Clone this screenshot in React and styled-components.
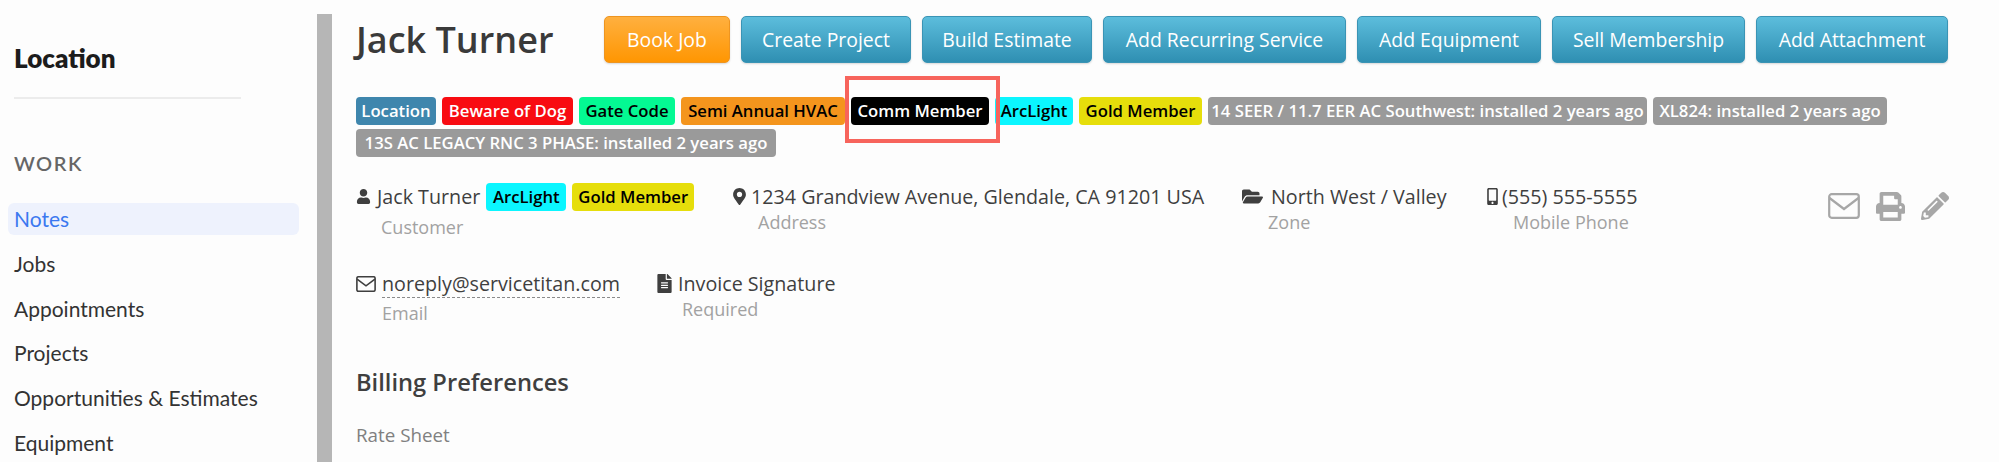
import React from "react";
import styled, { createGlobalStyle } from "styled-components";
import { FaUser, FaMapMarkerAlt, FaFolderOpen, FaMobileAlt, FaFileAlt, FaPrint, FaPencilAlt } from "react-icons/fa";

const GlobalStyle = createGlobalStyle`
	html, body {
		margin: 0;
		height: 100%;
		background: #fdfdfd;
		overflow: hidden;
	}
	body {
		font-family: "Open Sans", "Noto Sans", sans-serif;
		color: #3a3a3a;
	}
`;

const Page = styled.div`
	position: relative;
	display: flex;
	height: 462px;
	overflow: hidden;
`;

const Sidebar = styled.aside`
	width: 317px;
	flex: none;
	padding: 43px 18px 0 8px;
	box-sizing: border-box;
	font-family: "Lato", "Noto Sans", sans-serif;
`;

const SideTitle = styled.h2`
	margin: 0 0 0 6px;
	font-size: 26px;
	line-height: 30px;
	font-weight: 800;
	color: #1c1c1c;
`;

const SideRule = styled.hr`
	width: 227px;
	height: 2px;
	border: 0;
	margin: 24px 0 0 6px;
	background: #ececec;
`;

const SideHeading = styled.div`
	margin: 53px 0 0 6px;
	font-size: 20px;
	line-height: 22px;
	font-weight: 600;
	letter-spacing: 1.5px;
	color: #666;
`;

const NavList = styled.nav`
	display: flex;
	flex-direction: column;
	gap: 12.75px;
	margin-top: 29px;
`;

const NavItem = styled.div`
	height: 32px;
	line-height: 31px;
	padding-left: 6px;
	font-size: 21px;
	border-radius: 6px;
	color: ${({ $active }) => ($active ? "#3b78f0" : "#333")};
	background: ${({ $active }) => ($active ? "#eef2fd" : "transparent")};
`;

const Divider = styled.div`
	width: 15px;
	flex: none;
	margin-top: 14px;
	background: #b6b6b6;
`;

const Main = styled.main`
	flex: 1;
	min-width: 0;
	padding: 16px 0 0 24px;
`;

const Header = styled.div`
	display: flex;
	align-items: center;
	height: 47px;
`;

const Name = styled.h1`
	width: 248px;
	flex: none;
	margin: 0;
	font-size: 36px;
	line-height: 44px;
	font-weight: 600;
	color: #3a3a3a;
`;

const Buttons = styled.div`
	display: flex;
	gap: 11px;
`;

const ActionButton = styled.button`
	width: ${({ $w }) => $w}px;
	height: 47px;
	padding: 0;
	font-family: inherit;
	font-size: 19.4px;
	color: #fff;
	border-radius: 5px;
	border: 1px solid ${({ $orange }) => ($orange ? "#ee9520" : "#3a94b5")};
	background: ${({ $orange }) =>
		$orange ? "linear-gradient(#ffb03f, #ff9602)" : "linear-gradient(#5cbddc, #2f8fb2)"};
	box-shadow: 0 1px 2px rgba(0, 0, 0, 0.15);
`;

const TagRow = styled.div`
	display: flex;
	flex-wrap: wrap;
	gap: 4px 6px;
	width: 1560px;
	margin-top: 34px;
`;

const Tag = styled.span`
	display: inline-block;
	width: ${({ $w }) => $w}px;
	height: 28px;
	line-height: 27px;
	box-sizing: border-box;
	text-align: center;
	font-size: 16.7px;
	font-weight: 600;
	white-space: nowrap;
	border-radius: 4px;
	color: ${({ $fg }) => $fg || "#fff"};
	background: ${({ $bg }) => $bg};
`;

const InfoRow = styled.div`
	display: flex;
	margin-top: ${({ $top }) => $top}px;
`;

const Field = styled.div`
	width: ${({ $w }) => $w}px;
	flex: none;
`;

const FieldLine = styled.div`
	display: flex;
	align-items: center;
	gap: ${({ $gap }) => $gap ?? 6}px;
	height: 29px;
	font-size: 19.7px;
	white-space: nowrap;
	color: #3f3f3f;
	svg {
		flex: none;
	}
`;

const FieldLabel = styled.div`
	margin: ${({ $top }) => $top || 0}px 0 0 ${({ $indent }) => $indent}px;
	font-size: 18px;
	line-height: 22px;
	color: #a2a2a2;
`;

const EmailLink = styled.span`
	display: inline-block;
	line-height: 26px;
	margin-top: 2px;
	border-bottom: 1.5px dashed #8a8a8a;
`;

const Tools = styled.div`
	display: flex;
	align-items: center;
	gap: 16px;
	margin: 10px 0 0 188px;
	height: 28px;
	color: #a7a7a7;
`;

const Section = styled.h3`
	margin: 43px 0 0;
	font-size: 23.7px;
	line-height: 30px;
	font-weight: 600;
	color: #3f3f3f;
`;

const SubLabel = styled.div`
	margin-top: 26px;
	font-size: 18.8px;
	line-height: 24px;
	color: #808080;
`;

const Callout = styled.div`
	position: absolute;
	left: 845px;
	top: 76px;
	width: 155px;
	height: 67px;
	box-sizing: border-box;
	border: 4px solid #f7645c;
`;

const Envelope = ({ w, h, sw }) => (
	<svg width={w} height={h} viewBox="0 0 32 26" fill="none" stroke="currentColor" strokeWidth={sw}>
		<rect x="1.2" y="1.2" width="29.6" height="23.6" rx="2.5" />
		<path d="M1.5 5 L16 16 L30.5 5" />
	</svg>
);

const buttons = [
	{ label: "Book Job", w: 126, orange: true },
	{ label: "Create Project", w: 170 },
	{ label: "Build Estimate", w: 170 },
	{ label: "Add Recurring Service", w: 243 },
	{ label: "Add Equipment", w: 184 },
	{ label: "Sell Membership", w: 193 },
	{ label: "Add Attachment", w: 192 },
];

const tags = [
	{ label: "Location", bg: "#3f86ad", w: 80 },
	{ label: "Beware of Dog", bg: "#f80b11", w: 131 },
	{ label: "Gate Code", bg: "#04f993", fg: "#000", w: 96 },
	{ label: "Semi Annual HVAC", bg: "#f4951d", fg: "#000", w: 164 },
	{ label: "Comm Member", bg: "#000", w: 138 },
	{ label: "ArcLight", bg: "#0bf6ff", fg: "#000", w: 78 },
	{ label: "Gold Member", bg: "#e6de0b", fg: "#000", w: 123 },
	{ label: "14 SEER / 11.7 EER AC Southwest: installed 2 years ago", bg: "#9a9a9a", w: 439 },
	{ label: "XL824: installed 2 years ago", bg: "#9a9a9a", w: 234 },
	{ label: "13S AC LEGACY RNC 3 PHASE: installed 2 years ago", bg: "#9a9a9a", w: 420 },
];

const App = () => (
	<Page>
		<GlobalStyle />
		<Sidebar>
			<SideTitle>Location</SideTitle>
			<SideRule />
			<SideHeading>WORK</SideHeading>
			<NavList>
				<NavItem $active>Notes</NavItem>
				<NavItem>Jobs</NavItem>
				<NavItem>Appointments</NavItem>
				<NavItem>Projects</NavItem>
				<NavItem>Opportunities &amp; Estimates</NavItem>
				<NavItem>Equipment</NavItem>
			</NavList>
		</Sidebar>
		<Divider />
		<Main>
			<Header>
				<Name>Jack Turner</Name>
				<Buttons>
					{buttons.map(({ label, w, orange }) => (
						<ActionButton key={label} $w={w} $orange={orange}>
							{label}
						</ActionButton>
					))}
				</Buttons>
			</Header>
			<TagRow>
				{tags.map(({ label, bg, fg, w }) => (
					<Tag key={label} $bg={bg} $fg={fg} $w={w}>
						{label}
					</Tag>
				))}
			</TagRow>
			<InfoRow $top={25}>
				<Field $w={375}>
					<FieldLine>
						<FaUser size={15} />
						Jack Turner
						<Tag $bg="#0bf6ff" $fg="#000" $w={80}>ArcLight</Tag>
						<Tag $bg="#e6de0b" $fg="#000" $w={122}>Gold Member</Tag>
					</FieldLine>
					<FieldLabel $indent={25} $top={5}>Customer</FieldLabel>
				</Field>
				<Field $w={511}>
					<FieldLine $gap={3}>
						<FaMapMarkerAlt size={17} />
						1234 Grandview Avenue, Glendale, CA 91201 USA
					</FieldLine>
					<FieldLabel $indent={27}>Address</FieldLabel>
				</Field>
				<Field $w={242}>
					<FieldLine $gap={8}>
						<FaFolderOpen size={21} />
						North West / Valley
					</FieldLine>
					<FieldLabel $indent={26}>Zone</FieldLabel>
				</Field>
				<Field $w={156}>
					<FieldLine $gap={1}>
						<FaMobileAlt size={17} />
						(555) 555-5555
					</FieldLine>
					<FieldLabel $indent={29}>Mobile Phone</FieldLabel>
				</Field>
				<Tools>
					<Envelope w={32} h={26} sw={2.2} />
					<FaPrint size={29} />
					<FaPencilAlt size={28} />
				</Tools>
			</InfoRow>
			<InfoRow $top={31}>
				<Field $w={299}>
					<FieldLine>
						<Envelope w={20} h={16} sw={2.6} />
						<EmailLink>noreply@servicetitan.com</EmailLink>
					</FieldLine>
					<FieldLabel $indent={26} $top={4}>Email</FieldLabel>
				</Field>
				<Field $w={300}>
					<FieldLine $gap={4}>
						<FaFileAlt size={19} />
						Invoice Signature
					</FieldLine>
					<FieldLabel $indent={27}>Required</FieldLabel>
				</Field>
			</InfoRow>
			<Section>Billing Preferences</Section>
			<SubLabel>Rate Sheet</SubLabel>
		</Main>
		<Callout />
	</Page>
);

export default App;
